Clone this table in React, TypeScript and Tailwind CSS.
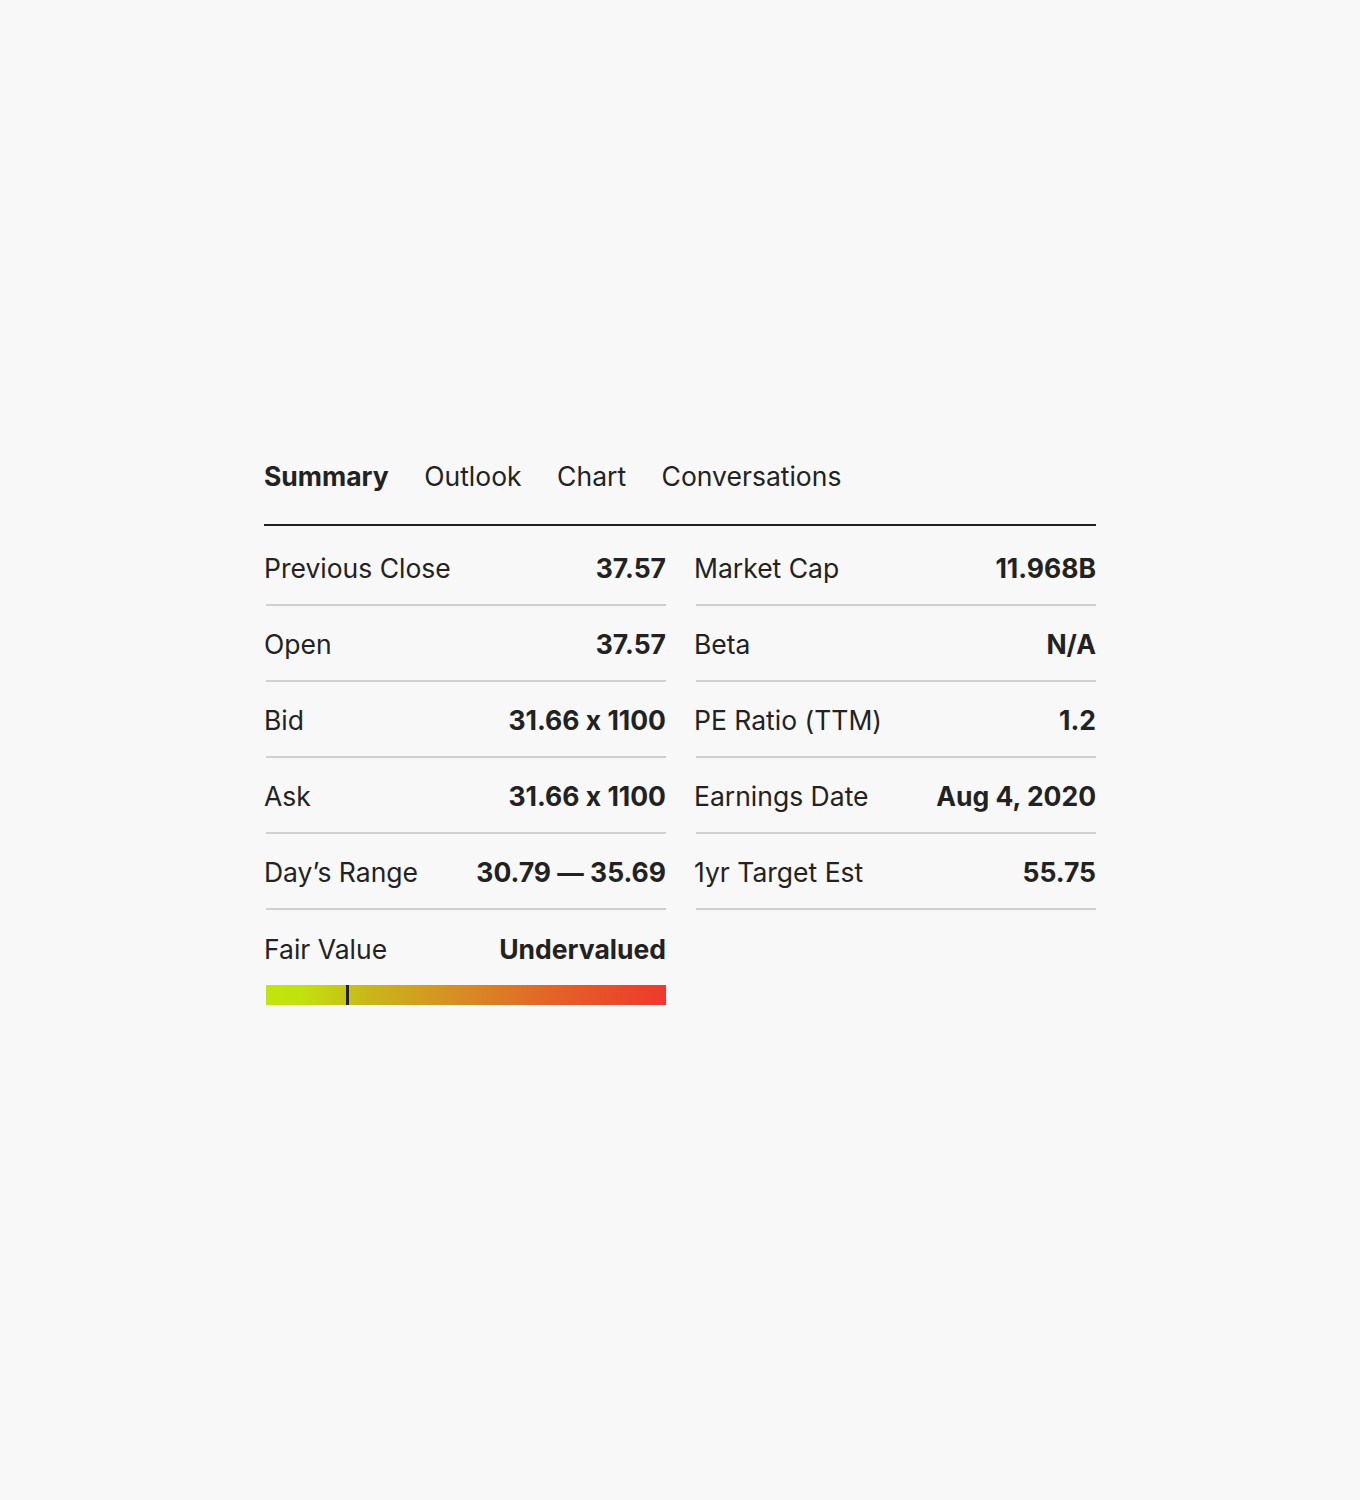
import React from "react";

const left = [
  ["Previous Close", "37.57"],
  ["Open", "37.57"],
  ["Bid", "31.66 x 1100"],
  ["Ask", "31.66 x 1100"],
  ["Day\u2019s Range", "30.79 \u2014 35.69"],
];
const right = [
  ["Market Cap", "11.968B"],
  ["Beta", "N/A"],
  ["PE Ratio (TTM)", "1.2"],
  ["Earnings Date", "Aug 4, 2020"],
  ["1yr Target Est", "55.75"],
];

function Row({ label, value }: { label: string; value: string }) {
  return (
    <div className="flex items-center justify-between h-[76px] border-b-2 border-[#d0d0d0] pt-[2px]">
      <span className="-ml-[2px]">{label}</span>
      <span className="font-bold">{value}</span>
    </div>
  );
}

export default function App() {
  return (
    <div
      className="min-h-[1500px] w-full bg-[#f8f8f8] text-[#222222] [font-feature-settings:'calt'_0]"
      style={{ fontFamily: "Inter, 'Liberation Sans', sans-serif" }}
    >
      <div className="w-[832px] ml-[264px] pt-[460px] text-[26.5px] leading-[32px]">
        <div className="flex gap-[35.5px] pb-[32px] border-b-2 border-[#222222]">
          <span className="font-bold">Summary</span>
          <span>Outlook</span>
          <span>Chart</span>
          <span>Conversations</span>
        </div>
        <div className="grid grid-cols-2 gap-x-[30px] pl-[2px] mt-[4px]">
          <div className="flex flex-col">
            {left.map(([l, v]) => (
              <Row key={l} label={l} value={v} />
            ))}
            <div className="flex items-center justify-between h-[76px] pt-[2px]">
              <span className="-ml-[2px]">Fair Value</span>
              <span className="font-bold">Undervalued</span>
            </div>
            <div className="relative h-[20px] -mt-[1px] w-full bg-[linear-gradient(to_right,#bfe60c_0%,#c2e10e_9%,#c9b81a_25%,#d88a22_50%,#e45e28_75%,#ee392c_100%)]">
              <div className="absolute left-[80px] top-0 h-full w-[3px] bg-[#222222]" />
            </div>
          </div>
          <div className="flex flex-col">
            {right.map(([l, v]) => (
              <Row key={l} label={l} value={v} />
            ))}
          </div>
        </div>
      </div>
    </div>
  );
}
